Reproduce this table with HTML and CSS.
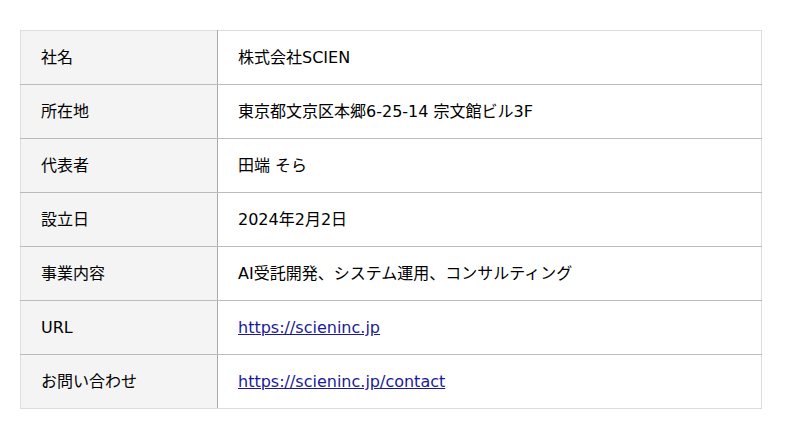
FILE: index.html
```html
<!DOCTYPE html>
<html lang="ja">
<head>
<meta charset="utf-8">
<link rel="stylesheet" href="styles.css">
</head>
<body>
<table class="info">
<tr><th>社名</th><td>株式会社SCIEN</td></tr>
<tr><th>所在地</th><td>東京都文京区本郷6-25-14 宗文館ビル3F</td></tr>
<tr><th>代表者</th><td>田端 そら</td></tr>
<tr><th>設立日</th><td>2024年2月2日</td></tr>
<tr><th>事業内容</th><td>AI受託開発、システム運用、コンサルティング</td></tr>
<tr><th>URL</th><td><a href="#">https://scieninc.jp</a></td></tr>
<tr><th>お問い合わせ</th><td><a href="#">https://scieninc.jp/contact</a></td></tr>
</table>
</body>
</html>
```
FILE: styles.css
```css
body {
  margin: 0;
  padding: 30px 20px;
  background: #fff;
  font-family: "DejaVu Sans", "Noto Sans CJK JP", sans-serif;
  font-size: 16px;
  color: #000;
}
.info {
  width: 742px;
  border-collapse: collapse;
  border: 1px solid #ddd;
}
.info th, .info td {
  padding: 17px 20px 16px;
  line-height: 20px;
  text-align: left;
  font-weight: normal;
  border-bottom: 1px solid #bbb;
  vertical-align: middle;
}
.info tr:last-child th, .info tr:last-child td {
  border-bottom: 1px solid #ddd;
}
.info th {
  width: 156px;
  background: #f4f4f4;
  border-right: 1px solid #aaa;
}
.info a {
  color: #1a1a99;
}
```
